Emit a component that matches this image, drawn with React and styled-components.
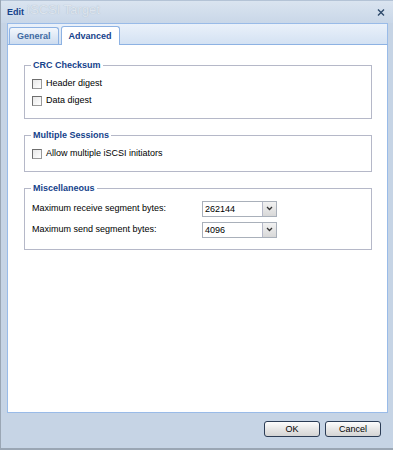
import React from 'react'
import styled, { createGlobalStyle } from 'styled-components'

const GlobalStyle = createGlobalStyle`
  html, body {
    margin: 0;
    padding: 0;
    background: #fff;
  }
  body {
    font-family: "Liberation Sans", Arial, sans-serif;
    font-size: 9px;
    line-height: 11px;
  }
`

const Arrow = () => (
  <svg width='7' height='5' viewBox='0 0 7 5'>
    <path d='M1 1 L3.5 3.5 L6 1' fill='none' stroke='#333' strokeWidth='1.3' />
  </svg>
)

function App() {
  const [header, setHeader] = React.useState(false)
  const [data, setData] = React.useState(false)
  const [multi, setMulti] = React.useState(false)

  return (
    <>
      <GlobalStyle />
      <Window>
        <TitleBar>
          <Title>Edit</Title>
          <Ghost>iSCSI Target</Ghost>
          <Close>
            <svg width='8' height='7' viewBox='0 0 8 7'>
              <path d='M1 0.5 L7 6.5 M7 0.5 L1 6.5' stroke='#2e4a6b' strokeWidth='1.4' />
            </svg>
          </Close>
        </TitleBar>
        <Body>
          <TabStrip>
            <Tab>General</Tab>
            <Tab active>Advanced</Tab>
          </TabStrip>
          <Panel>
            <Fieldset>
              <Legend>CRC Checksum</Legend>
              <Check>
                <Box type='checkbox' checked={header} onChange={() => setHeader(!header)} />
                Header digest
              </Check>
              <Check>
                <Box type='checkbox' checked={data} onChange={() => setData(!data)} />
                Data digest
              </Check>
            </Fieldset>
            <Fieldset>
              <Legend>Multiple Sessions</Legend>
              <Check>
                <Box type='checkbox' checked={multi} onChange={() => setMulti(!multi)} />
                Allow multiple iSCSI initiators
              </Check>
            </Fieldset>
            <Fieldset>
              <Legend>Miscellaneous</Legend>
              <FieldRow>
                <Label>Maximum receive segment bytes:</Label>
                <Combo>
                  <ComboText>262144</ComboText>
                  <ComboButton><Arrow /></ComboButton>
                </Combo>
              </FieldRow>
              <FieldRow>
                <Label>Maximum send segment bytes:</Label>
                <Combo>
                  <ComboText>4096</ComboText>
                  <ComboButton><Arrow /></ComboButton>
                </Combo>
              </FieldRow>
            </Fieldset>
          </Panel>
        </Body>
        <Footer>
          <Button>OK</Button>
          <Button>Cancel</Button>
        </Footer>
      </Window>
    </>
  )
}

const Window = styled.div`
  width: 393px;
  height: 450px;
  box-sizing: border-box;
  display: flex;
  flex-direction: column;
  background: #c6d4e5;
  border-left: 1px solid #9aa6b4;
  border-bottom: 2px solid #9aa6b4;
`

const TitleBar = styled.div`
  height: 23px;
  display: flex;
  align-items: center;
  padding: 0 8px 0 6px;
  background: linear-gradient(#dae4f0, #c9d7e8);
  border-top: 1px solid #b4c3d6;
  box-sizing: border-box;
`

const Title = styled.span`
  font-weight: bold;
  color: #15428b;
`

const Ghost = styled.span`
  margin-left: 3px;
  margin-top: -4px;
  color: #dde5ee;
  font-size: 13px;
  line-height: 14px;
  text-shadow: 0 0 1px #a9b6c5;
`

const Close = styled.span`
  margin-left: auto;
  display: flex;
`

const Body = styled.div`
  flex: 1;
  display: flex;
  flex-direction: column;
  padding: 0 5px 0 6px;
`

const TabStrip = styled.div`
  height: 20px;
  display: flex;
  align-items: flex-end;
  gap: 2px;
  padding-left: 1px;
  background: linear-gradient(#eaf1fa, #d4e2f3);
  border: 1px solid #99bbe8;
  border-bottom: 1px solid #8db2e3;
`

const Tab = styled.div`
  height: ${p => (p.active ? '19px' : '17px')};
  box-sizing: border-box;
  padding: 0 7px;
  display: flex;
  align-items: center;
  font-weight: bold;
  color: ${p => (p.active ? '#15428b' : '#416aa3')};
  border: 1px solid #8db2e3;
  border-bottom: none;
  border-radius: 3px 3px 0 0;
  background: ${p => (p.active ? '#fff' : 'linear-gradient(#f3f7fc, #cddcef)')};
  margin-bottom: ${p => (p.active ? '-1px' : '0')};
  position: relative;
`

const Panel = styled.div`
  flex: 1;
  background: #fff;
  border: 1px solid #99bbe8;
  border-top: none;
  padding: 15px 15px 0 16px;
  display: flex;
  flex-direction: column;
  gap: 11px;
`

const Fieldset = styled.fieldset`
  margin: 0;
  border: 1px solid #b5b8c8;
  padding: 4px 8px 9px 7px;
  display: flex;
  flex-direction: column;
`

const Legend = styled.legend`
  font-weight: bold;
  color: #15428b;
  padding: 0 2px;
  margin-left: -1px;
`

const Check = styled.label`
  display: flex;
  align-items: center;
  gap: 4px;
  color: #000;
  height: 17px;
`

const Box = styled.input`
  appearance: none;
  margin: 0;
  width: 10px;
  height: 10px;
  border: 1px solid #6e6e6e;
  border-right-color: #9a9a9a;
  border-bottom-color: #9a9a9a;
  box-sizing: border-box;
  background: linear-gradient(135deg, #e8e8e8, #fff);
`

const FieldRow = styled.div`
  display: grid;
  grid-template-columns: 170px auto;
  align-items: center;
  height: 21px;
`

const Label = styled.span`
  color: #000;
`

const Combo = styled.div`
  display: flex;
  width: 75px;
  height: 16px;
  box-sizing: border-box;
  border: 1px solid #a9b0ba;
  background: #fff;
`

const ComboText = styled.span`
  flex: 1;
  line-height: 14px;
  padding-left: 2px;
`

const ComboButton = styled.span`
  width: 13px;
  display: flex;
  align-items: center;
  justify-content: center;
  border-left: 1px solid #b5b8c8;
  background: linear-gradient(#f2f2f2, #d8d8d8);
`

const Footer = styled.div`
  height: 35px;
  display: flex;
  justify-content: flex-end;
  align-items: center;
  gap: 5px;
  padding: 0 12px 4px 0;
  box-sizing: border-box;
`

const Button = styled.button`
  width: 56px;
  height: 16px;
  padding: 0;
  font-family: inherit;
  font-size: 9px;
  color: #000;
  border: 1px solid #2b3c55;
  border-radius: 3px;
  background: linear-gradient(#fdfdfd, #e3e3e3 60%, #d4d4d4);
`

export default App
